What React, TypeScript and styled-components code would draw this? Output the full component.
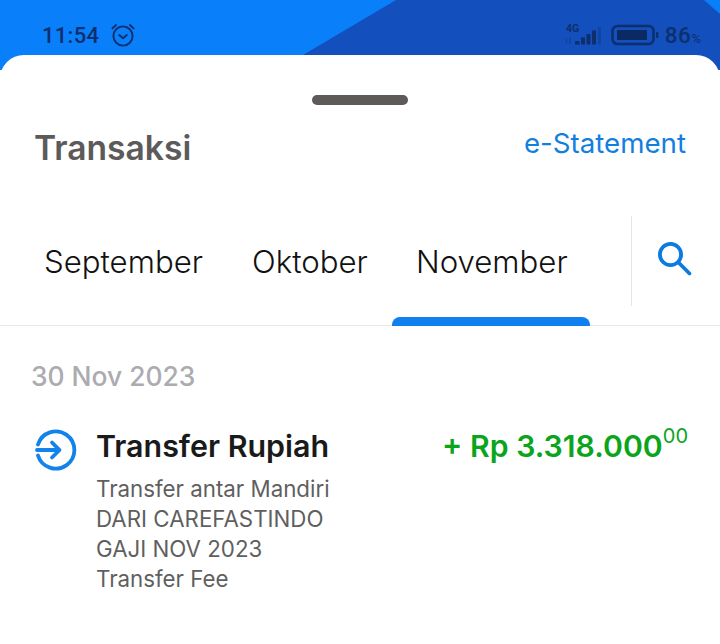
import React from "react";
import styled, { createGlobalStyle } from "styled-components";

const months = [
  { label: "September", width: 160 },
  { label: "Oktober", width: 116 },
  { label: "November", width: 150, active: true },
];
const detailLines = ["Transfer antar Mandiri", "DARI CAREFASTINDO", "GAJI NOV 2023", "Transfer Fee"];

const App = () => {
  return (
    <Screen>
      <GlobalStyle />
      <StatusBar>
        <StatusLeft>
          <Clock>11:54</Clock>
          <svg width="26" height="26" viewBox="0 0 26 26" fill="none" stroke="#0d2f6e" strokeWidth="1.9" strokeLinecap="round" strokeLinejoin="round">
            <circle cx="13" cy="14" r="9.6" />
            <path d="M9.2 13l3.8 3.2 3.8-3.2" />
            <path d="M2.4 6.4 6 3M23.6 6.4 20 3" />
          </svg>
        </StatusLeft>
        <StatusRight>
          <svg width="40" height="24" viewBox="0 0 40 24">
            <text x="1" y="8.5" fontFamily="Roboto, sans-serif" fontSize="10.5" fontWeight="700" fill="#0d2f6e">4G</text>
            <path d="M1.5 15.5v5M5 14.5v6" stroke="#0d2f6e" strokeOpacity=".45" strokeWidth="1.2" fill="none" />
            <rect x="10" y="18" width="4.5" height="3.5" fill="#0d2f6e" />
            <rect x="16" y="14.5" width="4" height="7" fill="#0d2f6e" />
            <rect x="21.5" y="11" width="4" height="10.5" fill="#0d2f6e" />
            <rect x="27" y="7.5" width="4" height="14" fill="#0d2f6e" />
            <rect x="33" y="4" width="3" height="17.5" fill="#0d2f6e" fillOpacity=".35" />
          </svg>
          <svg width="48" height="22" viewBox="0 0 48 22">
            <rect x="1.5" y="2" width="41" height="18" rx="5" fill="none" stroke="#0d2f6e" strokeWidth="2.6" />
            <rect x="6" y="6" width="30" height="10" rx="1" fill="#0b2a63" />
            <rect x="45" y="8" width="2.4" height="6" rx="1" fill="#0d2f6e" />
          </svg>
          <Battery>
            86<small>%</small>
          </Battery>
        </StatusRight>
      </StatusBar>
      <Sheet>
        <Handle />
        <TitleRow>
          <Title>Transaksi</Title>
          <StatementLink>e-Statement</StatementLink>
        </TitleRow>
        <TabBar>
          <Tabs>
            {months.map((month) => (
              <Tab key={month.label} $width={month.width} $active={month.active}>
                {month.label}
              </Tab>
            ))}
          </Tabs>
          <SearchBox>
            <svg width="40" height="40" viewBox="0 0 40 40" fill="none" stroke="#0d7ae0" strokeWidth="3.8" strokeLinecap="round">
              <circle cx="16.5" cy="15.5" r="10.6" />
              <path d="M24.5 23.5l11 11" />
            </svg>
          </SearchBox>
        </TabBar>
        <DateLabel>30 Nov 2023</DateLabel>
        <TransactionRow>
          <TransactionIcon>
            <svg width="44" height="44" viewBox="0 0 44 44" fill="none" stroke="#1283ea" strokeWidth="3.8" strokeLinecap="round" strokeLinejoin="round">
              <path d="M4 16.5A18.6 18.6 0 1 1 4 27.5" />
              <path d="M3 22h21" />
              <path d="M18 14.5l7.5 7.5-7.5 7.5" />
            </svg>
          </TransactionIcon>
          <TransactionBody>
            <TransactionHead>
              <TransactionName>Transfer Rupiah</TransactionName>
              <Amount>
                + Rp 3.318.000<sup>00</sup>
              </Amount>
            </TransactionHead>
            <Details>
              {detailLines.map((line) => (
                <DetailLine key={line}>{line}</DetailLine>
              ))}
            </Details>
          </TransactionBody>
        </TransactionRow>
      </Sheet>
    </Screen>
  );
};

export default App;

const GlobalStyle = createGlobalStyle`
  html, body {
    margin: 0;
    padding: 0;
    background: #ffffff;
  }
  * {
    box-sizing: border-box;
  }
`;
const Screen = styled.div`
  position: relative;
  width: 720px;
  height: 644px;
  overflow: hidden;
  background: #ffffff;
  font-family: Inter, "Noto Sans", sans-serif;
`;
const StatusBar = styled.div`
  position: relative;
  height: 70px;
  margin-bottom: -15px;
  padding: 0 19px 15px 42px;
  display: flex;
  align-items: center;
  justify-content: space-between;
  background: #0a7ffa;
  &::before {
    content: "";
    position: absolute;
    inset: 0;
    background: #134fbd;
    clip-path: polygon(303px 55px, 396px 0, 704px 0, 720px 14px, 720px 70px, 303px 70px);
  }
`;
const StatusLeft = styled.div`
  position: relative;
  display: flex;
  align-items: center;
  gap: 11px;
  padding-top: 15px;
`;
const Clock = styled.span`
  font-family: Roboto, sans-serif;
  font-size: 22px;
  font-weight: 500;
  letter-spacing: 0.3px;
  color: #0d2f6e;
`;
const StatusRight = styled.div`
  position: relative;
  display: flex;
  align-items: center;
  gap: 6px;
  padding-top: 15px;
`;
const Battery = styled.span`
  font-family: Roboto, sans-serif;
  font-size: 22.5px;
  font-weight: 500;
  letter-spacing: 0.6px;
  color: #0d2f6e;
  small {
    font-size: 13px;
    font-weight: 400;
    letter-spacing: 0;
  }
`;
const Sheet = styled.div`
  position: relative;
  height: 589px;
  background: #ffffff;
  border-radius: 24px 24px 0 0;
  display: flex;
  flex-direction: column;
`;
const Handle = styled.div`
  width: 96px;
  height: 10px;
  margin: 40px auto 0;
  border-radius: 5px;
  background: #5e5a5a;
`;
const TitleRow = styled.div`
  display: flex;
  justify-content: space-between;
  align-items: flex-start;
  padding: 0 34px;
  margin-top: 22px;
  height: 89px;
`;
const Title = styled.div`
  font-size: 33.6px;
  line-height: 42px;
  font-weight: 600;
  color: #5c5a5a;
`;
const StatementLink = styled.div`
  margin-top: -1px;
  font-size: 27.7px;
  line-height: 34px;
  font-weight: 400;
  color: #127fde;
`;
const TabBar = styled.div`
  display: flex;
  height: 110px;
  border-bottom: 1px solid #e8e8e8;
`;
const Tabs = styled.div`
  display: flex;
  width: 631px;
  gap: 48px;
  padding-left: 44px;
`;
const Tab = styled.div<{ $width: number; $active?: boolean }>`
  position: relative;
  width: ${({ $width }) => $width}px;
  padding-top: 27px;
  font-size: 31.2px;
  font-weight: 300;
  line-height: 38px;
  white-space: nowrap;
  color: #111111;
  &::after {
    content: "";
    display: ${({ $active }) => ($active ? "block" : "none")};
    position: absolute;
    left: -24px;
    right: -24px;
    bottom: -1px;
    height: 9px;
    background: #0f80ee;
    border-radius: 8px 8px 0 0;
  }
`;
const SearchBox = styled.div`
  width: 89px;
  height: 90px;
  border-left: 1px solid #e6e6e6;
  display: flex;
  align-items: flex-start;
  padding: 23px 0 0 22px;
`;
const DateLabel = styled.div`
  margin: 32px 0 0 31px;
  font-size: 26.4px;
  line-height: 36px;
  font-weight: 500;
  color: #ababb0;
`;
const TransactionRow = styled.div`
  display: flex;
  margin-top: 33px;
  padding: 0 32px 0 34px;
`;
const TransactionIcon = styled.div`
  width: 62px;
  flex-shrink: 0;
  padding-top: 1px;
`;
const TransactionBody = styled.div`
  flex: 1;
`;
const TransactionHead = styled.div`
  display: flex;
  justify-content: space-between;
`;
const TransactionName = styled.div`
  font-size: 30.4px;
  line-height: 38px;
  font-weight: 600;
  color: #1a1a1a;
`;
const Amount = styled.div`
  font-size: 30.2px;
  line-height: 38px;
  font-weight: 600;
  color: #0aa51c;
  white-space: nowrap;
  sup {
    font-size: 20px;
    font-weight: 400;
    line-height: 0;
    vertical-align: 14px;
  }
`;
const Details = styled.div`
  margin-top: 9px;
`;
const DetailLine = styled.div`
  font-size: 22.3px;
  line-height: 30px;
  color: #5f5f5f;
`;
